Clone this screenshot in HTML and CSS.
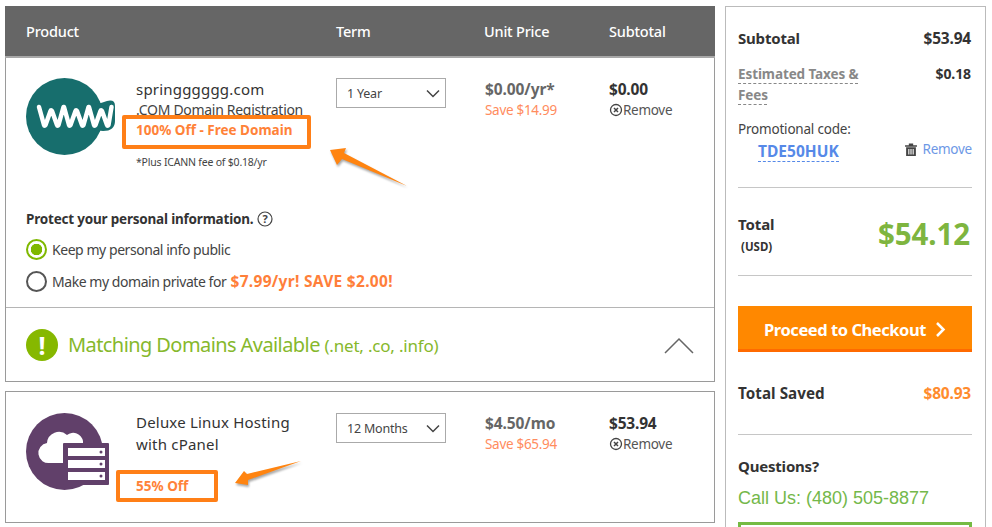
FILE: index.html
```html
<!DOCTYPE html>
<html lang="en">
<head>
<meta charset="utf-8">
<title>Cart</title>
<link rel="stylesheet" href="styles.css">
</head>
<body>
<div class="page">
  <main class="main">
    <section class="card first">
      <div class="head">
        <div class="c-prod">Product</div><div class="c-term">Term</div><div class="c-price">Unit Price</div><div class="c-sub">Subtotal</div>
      </div>
      <div class="row row-domain">
        <div class="c-icon">
          <svg class="icon" width="90" height="78" viewBox="0 0 90 78"><circle cx="38.500" cy="38.500" r="38.500" fill="#176e6d"/><path d="M70 26q6-1 11-3 8-2 8 5v15q0 10-12 10l-9-1z" fill="#176e6d"/><path d="M13 29l5 18q.5 1.500 1.500 0l5-14q.5-1.500 1.500 0l5 14q.5 1.500 1.500 0l5-18M38 29l5 18q.5 1.500 1.500 0l5-14q.5-1.500 1.500 0l5 14q.5 1.500 1.500 0l5-18M63 29l5 18q.5 1.500 1.500 0l5-14q.5-1.500 1.500 0l5 14q.5 1.500 1.500 0l3-18" fill="none" stroke="#fff" stroke-width="4.500" stroke-linecap="round" stroke-linejoin="round"/></svg>
        </div>
        <div class="c-info">
          <div class="name">springggggg.com</div>
          <div class="desc">.COM Domain Registration</div>
          <div class="promo promo-a">100% Off - Free Domain</div>
          <div class="fine">*Plus ICANN fee of $0.18/yr</div>
        </div>
        <div class="c-term"><div class="select"><span>1 Year</span><svg width="14" height="9" viewBox="0 0 14 9"><path d="M1 1.500l6 6 6-6" fill="none" stroke="#444" stroke-width="1.500"/></svg></div></div>
        <div class="c-price"><div class="price">$0.00/yr*</div><div class="save">Save $14.99</div></div>
        <div class="c-sub"><div class="amount">$0.00</div><div class="remove"><svg width="14" height="14" viewBox="0 0 14 14"><circle cx="7" cy="7" r="5.500" fill="none" stroke="#444" stroke-width="1.300"/><path d="M5 5l4 4M9 5l-4 4" stroke="#444" stroke-width="1.500"/></svg>Remove</div></div>
      </div>
      <div class="privacy">
        <div class="protect">Protect your personal information.<svg width="16" height="16" viewBox="0 0 16 16"><circle cx="8" cy="8" r="7" fill="none" stroke="#444" stroke-width="1.200"/><text x="8" y="12" text-anchor="middle" class="q">?</text></svg></div>
        <div class="radio"><span class="dot on"></span><span>Keep my personal info public</span></div>
        <div class="radio"><span class="dot"></span><span>Make my domain private for <b class="deal">$7.99/yr! SAVE $2.00!</b></span></div>
      </div>
      <div class="match">
        <span class="bang">!</span>
        <span class="mtext">Matching Domains Available <small>(.net, .co, .info)</small></span>
        <svg class="chev" width="30" height="17" viewBox="0 0 30 17"><path d="M1 16L15 2l14 14" fill="none" stroke="#666" stroke-width="1.500"/></svg>
      </div>
    </section>
    <section class="card second">
      <div class="row row-host">
        <div class="c-icon">
          <svg class="icon" width="90" height="78" viewBox="0 0 90 78"><circle cx="38.500" cy="38.500" r="38.500" fill="#61406a"/><path d="M24 50a10 10 0 0 1-3-20 12 12 0 0 1 20-8 10 10 0 0 1 16 6v22z" fill="#fff"/><rect x="37" y="30" width="46" height="42" rx="1" fill="#61406a"/><rect x="42" y="35" width="37" height="8" fill="#fff"/><rect x="42" y="47" width="37" height="8" fill="#fff"/><rect x="42" y="59" width="37" height="8" fill="#fff"/><circle cx="75" cy="39" r="1.500" fill="#61406a"/><circle cx="75" cy="51" r="1.500" fill="#61406a"/><circle cx="75" cy="63" r="1.500" fill="#61406a"/></svg>
        </div>
        <div class="c-info">
          <div class="name">Deluxe Linux Hosting<br>with cPanel</div>
          <div class="promo promo-b">55% Off</div>
        </div>
        <div class="c-term"><div class="select"><span>12 Months</span><svg width="14" height="9" viewBox="0 0 14 9"><path d="M1 1.500l6 6 6-6" fill="none" stroke="#444" stroke-width="1.500"/></svg></div></div>
        <div class="c-price"><div class="price">$4.50/mo</div><div class="save">Save $65.94</div></div>
        <div class="c-sub"><div class="amount">$53.94</div><div class="remove"><svg width="14" height="14" viewBox="0 0 14 14"><circle cx="7" cy="7" r="5.500" fill="none" stroke="#444" stroke-width="1.300"/><path d="M5 5l4 4M9 5l-4 4" stroke="#444" stroke-width="1.500"/></svg>Remove</div></div>
      </div>
    </section>
  </main>
  <aside class="side">
    <div class="line sub"><b>Subtotal</b><b class="subval">$53.94</b></div>
    <div class="line tax"><span class="est">Estimated Taxes &amp; Fees</span><b>$0.18</b></div>
    <div class="promo-label">Promotional code:</div>
    <div class="line code"><span class="tde">TDE50HUK</span><span class="rem"><svg width="12" height="13" viewBox="0 0 11 12"><path d="M0 2h11v1.500H0zM3.500 2V.5h4V2zM1 4h9v8H1z" fill="#444"/><path d="M3.500 5.500V10.500M5.500 5.500V10.500M7.500 5.500V10.500" stroke="#fff"/></svg>Remove</span></div>
    <hr class="rule r1">
    <div class="line total"><div><b>Total</b><div class="usd">(USD)</div></div><b class="grand">$54.12</b></div>
    <hr class="rule r2">
    <div class="checkout">Proceed to Checkout<svg width="11" height="17" viewBox="0 0 11 17"><path d="M2 2l6.500 6.500L2 15" fill="none" stroke="#fff" stroke-width="2.500"/></svg></div>
    <div class="line saved"><b class="savedlabel">Total Saved</b><b class="orange">$80.93</b></div>
    <hr class="rule r3">
    <div class="questions">Questions?</div>
    <div class="call">Call Us: (480) 505-8877</div>
    <div class="chat"></div>
  </aside>
  <svg class="arrows" width="992" height="527" viewBox="0 0 992 527" aria-hidden="true">
    <path d="M330 150L346 148 344 153 407 186 342 159 337 165z" fill="#ff8410"/>
    <path d="M235 483L244 471 247 474 301 461 248 480 248 485z" fill="#ff8410"/>
  </svg>
</div>
</body>
</html>
```
FILE: styles.css
```css
* { box-sizing: border-box; }
html, body { margin: 0; height: 527px; overflow: hidden; background: #fff; }
body { font-family: "Noto Sans", "Open Sans", sans-serif; color: #333; font-size: 14px; }
.page { position: relative; display: flex; align-items: flex-start; gap: 10px; width: 992px; height: 527px; padding: 6px 0 0 5px; overflow: hidden; }
.main { width: 710px; display: flex; flex-direction: column; gap: 9px; }
.card { border: 1px solid #9a9a9a; background: #fff; }
.first { height: 376px; border-top: 0; }
.second { height: 132px; }
.head { display: flex; height: 52px; align-items: center; background: #666; color: #fff; font-size: 14.500px; font-weight: 500; border-bottom: 2px solid #a8a8a8; margin: 0 -1px; padding-bottom: 1px; letter-spacing: -.2px; }
.head .c-prod { width: 331px; padding-left: 21px; }
.head .c-term { width: 149px; margin: 0; }
.head .c-price { width: 124px; margin: 0 0 0 -1px; padding-right: 0; }
.head .c-sub { margin: 0 0 0 1px; }
.row { display: flex; align-items: flex-start; }
.row-domain { height: 135px; padding: 20px 0 0 20px; }
.row-host { padding: 21px 0 0 20px; }
.c-icon { width: 110px; flex: none; }
.icon { display: block; }
.c-info { position: relative; width: 200px; flex: none; }
.name { font-size: 15px; line-height: 22px; color: #333; letter-spacing: .2px; }
.row-host .name { margin-top: -2px; }
.desc { font-size: 14px; line-height: 20px; letter-spacing: -.3px; color: #444; }
.promo { position: absolute; background: #fff; border: 4px solid #ff7f17; border-radius: 2px; color: #ff8238; font-size: 13.500px; font-weight: 700; letter-spacing: 0; }
.promo-a { left: -14px; top: 37px; width: 189px; height: 34px; padding: 2px 0 0 10px; line-height: 18px; }
.promo-b { left: -20px; top: 57px; width: 102px; height: 32px; padding: 2px 0 0 16px; line-height: 20px; }
.fine { font-size: 10.500px; line-height: 14px; margin-top: 35px; letter-spacing: -.2px; color: #444; }
.c-term { flex: none; width: 149px; }
.select { width: 110px; height: 30px; border: 1px solid #aaa; display: flex; align-items: center; justify-content: space-between; padding: 0 5px 0 10px; font-size: 12.500px; color: #444; letter-spacing: -.2px; }
.row-domain .select { padding-top: 1px; }
.c-price { flex: none; width: 124px; }
.price { font-size: 15.500px; font-weight: 700; color: #666; line-height: 22px; letter-spacing: -.1px; }
.save { font-size: 13.500px; color: #ff8c5e; line-height: 20px; letter-spacing: -.3px; }
.amount { font-size: 15.500px; font-weight: 700; color: #333; line-height: 22px; letter-spacing: -.2px; }
.remove { display: flex; align-items: center; font-size: 13.500px; color: #555; line-height: 20px; letter-spacing: -.3px; }
.row-host .c-price, .row-host .c-sub { margin-top: -1px; }
.privacy { height: 114px; padding: 16px 0 0 20px; }
.protect { display: flex; align-items: center; gap: 4px; font-size: 13.500px; font-weight: 700; color: #333; line-height: 20px; letter-spacing: -.2px; margin-bottom: 9px; }
.q { font: 700 11px "Noto Sans", sans-serif; fill: #444; }
.radio { display: flex; align-items: center; gap: 5px; height: 22px; margin-bottom: 10px; font-size: 14px; color: #444; letter-spacing: -.45px; }
.dot { width: 21px; height: 21px; border: 2px solid #555; border-radius: 50%; flex: none; }
.dot.on { border-color: #7fb800; background: radial-gradient(circle, #7fb800 0 5.500px, #fff 6px); }
.deal { color: #ff7f3a; font-size: 15.500px; letter-spacing: .3px; margin-left: 1px; }
.match { display: flex; align-items: center; height: 75px; border-top: 1px solid #b5b5b5; padding: 0 20px 2px; }
.bang { width: 32px; height: 32px; border-radius: 50%; background: #86b800; color: #fff; font-size: 25px; font-weight: 700; display: flex; align-items: center; justify-content: center; flex: none; margin-top: 2px; }
.mtext { margin-left: 10px; font-size: 20px; color: #86b82c; letter-spacing: -.58px; flex: 1; }
.mtext small { font-size: 17px; letter-spacing: -.2px; }
.chev { margin-top: 2px; }
.side { width: 261px; height: 540px; flex: none; border: 1px solid #bbb; padding: 20px 13px 0 12px; }
.line { display: flex; justify-content: space-between; align-items: flex-start; }
.line b { font-weight: 700; }
.sub { font-size: 15px; line-height: 22px; color: #333; letter-spacing: -.2px; }
.subval { font-size: 15.500px; margin-right: 1px; }
.tax { margin-top: 15px; font-size: 13.500px; color: #333; line-height: 20px; letter-spacing: -.1px; }
.est { width: 130px; font-weight: 700; color: #888; line-height: 20.500px; text-decoration: underline dashed #888 1px; text-underline-offset: 4px; }
.tax b { font-size: 14px; margin-right: 1px; }
.promo-label { margin-top: 14px; font-size: 13.500px; line-height: 20px; color: #444; letter-spacing: -.2px; }
.code { align-items: center; height: 24px; }
.tde { margin-left: 20px; font-size: 15.500px; font-weight: 700; color: #5689e8; border-bottom: 1px dashed #5689e8; line-height: 20px; letter-spacing: .03px; }
.rem { display: flex; align-items: center; gap: 5px; margin-top: -4px; font-size: 13.500px; color: #6d98e6; letter-spacing: -.25px; }
.rule { border: 0; border-top: 1px solid #c6c6c6; margin: 0; }
.r1 { margin-top: 24px; }
.total { margin-top: 25px; font-size: 15px; line-height: 22px; letter-spacing: -.1px; }
.usd { font-size: 11.500px; font-weight: 700; line-height: 24px; padding-left: 3px; letter-spacing: 0; }
.grand { font-size: 29.500px; line-height: 40px; color: #7eb53f; margin: 1px 2px 0 0; }
.r2 { margin-top: 16px; }
.checkout { margin-top: 30px; height: 46px; background: #ff8800; border-bottom: 3px solid #ff6a00; color: #fff; display: flex; align-items: center; justify-content: center; gap: 9px; font-size: 16.500px; font-weight: 700; letter-spacing: -.45px; padding-top: 4px; }
.saved { margin-top: 30px; font-size: 15px; line-height: 22px; letter-spacing: -.2px; }
.savedlabel { letter-spacing: .05px; font-size: 15.200px; }
.orange { color: #ff8c2e; font-size: 15.500px; margin-right: 1px; }
.r3 { margin-top: 30px; }
.questions { margin-top: 20px; font-size: 15px; font-weight: 700; line-height: 22px; letter-spacing: -.2px; }
.call { margin-top: 9px; font-family: "Liberation Sans", sans-serif; font-size: 18px; line-height: 24px; color: #74b84a; }
.chat { margin-top: 12px; height: 40px; border: 3px solid #75bb43; }
.arrows { position: absolute; left: 0; top: 0; pointer-events: none; filter: drop-shadow(1px 2px 1px rgba(0,0,0,.35)); }
```
